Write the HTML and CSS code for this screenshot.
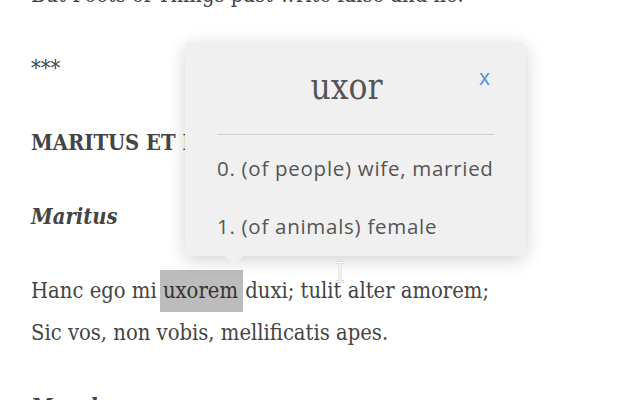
FILE: index.html
```html
<!DOCTYPE html>
<html lang="en">
<head>
<meta charset="UTF-8">
<meta name="viewport" content="width=device-width, initial-scale=1.0">
<title>Maritus et Marula</title>
<link rel="stylesheet" href="styles.css">
</head>
<body>
  <div class="poem">
    <p>But Poets of Things past write false and lie.</p>
    <p>***</p>
    <p class="heading">MARITUS ET MARULA</p>
    <p class="speaker">Maritus</p>
    <p>Hanc ego mi <span class="word-selected">uxorem</span> duxi; tulit alter amorem;<br>
      Sic vos, non vobis, mellificatis apes.</p>
    <p class="speaker">Marula</p>
  </div>

  <div class="popup">
    <div class="popup-head">
      <span class="popup-word">uxor</span>
      <span class="popup-close">x</span>
    </div>
    <ol class="meanings">
      <li>0. (of people) wife, married</li>
      <li>1. (of animals) female</li>
    </ol>
  </div>

  <svg class="ibeam" width="14" height="22" viewBox="0 0 14 22">
    <path d="M3 1.5h8M7 1.5v19M3 20.5h8" stroke="#d8d8d8" stroke-width="3" fill="none"/>
    <path d="M3 1.5h8M7 1.5v19M3 20.5h8" stroke="#fff" stroke-width="1.2" fill="none"/>
  </svg>
</body>
</html>
```

FILE: styles.css
```css
* {
  box-sizing: border-box;
  margin: 0;
  padding: 0;
}

body {
  background-color: #fff;
  font-family: "DejaVu Serif", serif;
  color: #444;
  overflow: hidden;
  height: 400px;
}

.poem {
  margin-top: -26px;
  padding-left: 31px;
  font-size: 21.8px;
  font-stretch: condensed;
  line-height: 41px;
}

.poem p {
  margin-bottom: 33px;
}

.heading {
  font-weight: bold;
}

.speaker {
  font-weight: bold;
  font-style: italic;
}

.word-selected {
  display: inline-block;
  background-color: #bcbcbc;
  color: #333;
  line-height: 42px;
  padding: 0 5px 0 3px;
  margin: 0 -4px 0 -3px;
}

.popup {
  position: absolute;
  left: 185px;
  top: 42px;
  width: 341px;
  height: 214px;
  padding: 0 32px;
  background-color: #f0f0f0;
  border-radius: 6px;
  box-shadow: 0 4px 18px rgba(0, 0, 0, 0.18);
  font-family: "Open Sans", sans-serif;
  color: #555;
}

.popup::after {
  content: "";
  position: absolute;
  left: 40px;
  bottom: -10px;
  border-left: 9px solid transparent;
  border-right: 9px solid transparent;
  border-top: 10px solid #f0f0f0;
}

.popup-head {
  position: relative;
  height: 93px;
  padding-right: 18px;
  border-bottom: 1px solid #cfcfcf;
  text-align: center;
}

.popup-word {
  display: inline-block;
  margin-top: 23px;
  font-family: "DejaVu Serif", serif;
  font-stretch: condensed;
  font-size: 35px;
  line-height: 44px;
}

.popup-close {
  position: absolute;
  right: 4px;
  top: 21px;
  font-size: 21px;
  color: #4a90e2;
}

.meanings {
  list-style: none;
  padding-top: 18px;
  font-size: 20.5px;
  letter-spacing: 0.72px;
}

.meanings li {
  line-height: 30px;
  margin-bottom: 28px;
}

.ibeam {
  position: absolute;
  left: 333px;
  top: 261px;
}
```
